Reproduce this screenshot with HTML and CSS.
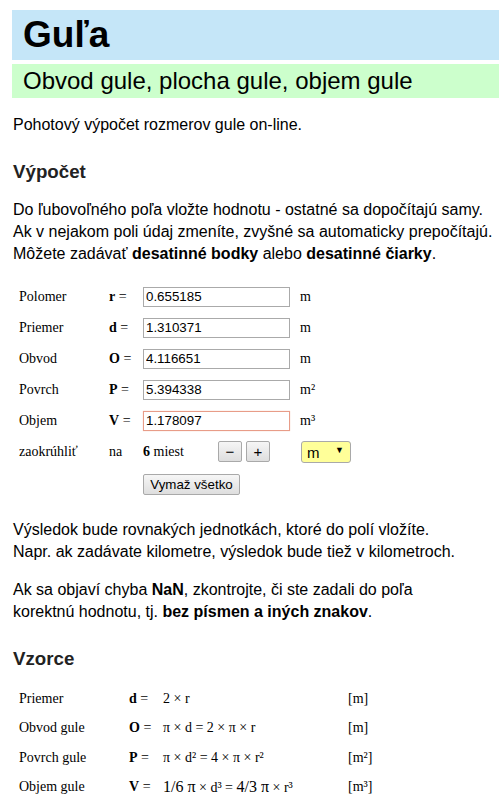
FILE: index.html
```html
<!DOCTYPE html>
<html lang="sk">
<head>
<meta charset="utf-8">
<title>Guľa</title>
<link rel="stylesheet" href="styles.css">
</head>
<body>
<h1 class="title">Guľa</h1>
<h2 class="subtitle">Obvod gule, plocha gule, objem gule</h2>
<p class="intro">Pohotový výpočet rozmerov gule on-line.</p>
<h3 class="section">Výpočet</h3>
<p class="text">Do ľubovoľného poľa vložte hodnotu - ostatné sa dopočítajú samy.<br>Ak v nejakom poli údaj zmeníte, zvyšné sa automaticky prepočítajú.<br>Môžete zadávať <b>desatinné bodky</b> alebo <b>desatinné čiarky</b>.</p>

<div class="calc">
  <span class="lbl">Polomer</span><span class="var"><b>r</b> =</span><input class="field" type="text" value="0.655185"><span class="unit">m</span>
  <span class="lbl">Priemer</span><span class="var"><b>d</b> =</span><input class="field" type="text" value="1.310371"><span class="unit">m</span>
  <span class="lbl">Obvod</span><span class="var"><b>O</b> =</span><input class="field" type="text" value="4.116651"><span class="unit">m</span>
  <span class="lbl">Povrch</span><span class="var"><b>P</b> =</span><input class="field" type="text" value="5.394338"><span class="unit">m²</span>
  <span class="lbl">Objem</span><span class="var"><b>V</b> =</span><input class="field field-active" type="text" value="1.178097"><span class="unit">m³</span>
  <span class="lbl">zaokrúhliť</span><span class="var">na</span>
  <span class="round"><span class="places"><b>6</b> miest</span><button class="btn btn-small">−</button><button class="btn btn-small">+</button></span>
  <span class="unitsel"><select class="sel"><option>m</option></select><span class="arrow">▼</span></span>
  <span class="lbl"></span><span class="var"></span><span class="clear"><button class="btn btn-clear">Vymaž všetko</button></span><span></span>
</div>

<p class="text after">Výsledok bude rovnakých jednotkách, ktoré do polí vložíte.<br>Napr. ak zadávate kilometre, výsledok bude tiež v kilometroch.</p>
<p class="text">Ak sa objaví chyba <b>NaN</b>, zkontrojte, či ste zadali do poľa<br>korektnú hodnotu, tj. <b>bez písmen a iných znakov</b>.</p>

<h3 class="section">Vzorce</h3>
<div class="formulas">
  <span class="lbl">Priemer</span><span class="var"><b>d</b> =</span><span class="f">2 × r</span><span class="u">[m]</span>
  <span class="lbl">Obvod gule</span><span class="var"><b>O</b> =</span><span class="f">π × d = 2 × π × r</span><span class="u">[m]</span>
  <span class="lbl">Povrch gule</span><span class="var"><b>P</b> =</span><span class="f">π × d² = 4 × π × r²</span><span class="u">[m²]</span>
  <span class="lbl">Objem gule</span><span class="var"><b>V</b> =</span><span class="f"><span class="big">1/6 π</span> × d³ = <span class="big">4/3 π</span> × r³</span><span class="u">[m³]</span>
</div>
</body>
</html>
```

FILE: styles.css
```css
html, body { background: #fff; }
body {
  margin: 10px 0 0 12px;
  font-family: "Liberation Sans", Arial, sans-serif;
  font-size: 16px;
  color: #000;
}
.title {
  margin: 0;
  background: #c5e6f8;
  height: 50px;
  line-height: 50px;
  padding: 0 11px;
  font-size: 37px;
  font-weight: bold;
}
.subtitle {
  margin: 4px 0 0;
  background: #ccffcc;
  height: 34px;
  line-height: 34px;
  padding: 0 11px;
  font-size: 24px;
  font-weight: normal;
}
.intro {
  margin: 16px 0 0 1px;
  line-height: 22px;
}
.section {
  margin: 25px 0 0 1px;
  font-size: 18.72px;
  font-weight: bold;
  color: #222;
  line-height: 22px;
}
.text {
  margin: 16px 0 0 1px;
  line-height: 22px;
}
.calc {
  display: grid;
  grid-template-columns: 90px 34px 157px auto;
  grid-template-rows: repeat(6, 31px) 34px;
  margin: 16px 0 0 7px;
  font-family: "Liberation Serif", "Times New Roman", serif;
  font-size: 14px;
  align-items: center;
}
.calc .lbl, .calc .var, .calc .unit { line-height: 20px; }
.field {
  box-sizing: border-box;
  width: 147px;
  height: 20px;
  border: 1px solid #aaa;
  padding: 1px 2px;
  margin: 0;
  font-family: "Liberation Sans", Arial, sans-serif;
  font-size: 13.33px;
  color: #000;
  outline: none;
}
.field-active { border-color: #e89c88; box-shadow: 0 0 1px #f2c2b4; }
.round {
  display: flex;
  align-items: center;
}
.places { width: 75px; }
.btn {
  box-sizing: border-box;
  font-family: "Liberation Sans", Arial, sans-serif;
  font-size: 13.33px;
  color: #000;
  background: linear-gradient(#f6f6f6, #dedede);
  border: 1px solid #a9a9a9;
  border-radius: 2px;
  padding: 0;
  margin: 0;
}
.btn-small {
  width: 24px;
  height: 21px;
  margin-right: 4px;
  font-size: 15px;
  line-height: 18px;
}
.unitsel {
  position: relative;
  display: inline-block;
  width: 50px;
  height: 22px;
  margin-left: 1px;
}
.sel {
  appearance: none;
  -webkit-appearance: none;
  box-sizing: border-box;
  width: 50px;
  height: 22px;
  background: #ffff99;
  border: 1px solid #a9a9a9;
  border-radius: 3px;
  padding: 2px 0 0 5px;
  margin: 0;
  font-family: "Liberation Sans", Arial, sans-serif;
  font-size: 15px;
  color: #000;
}
.arrow {
  position: absolute;
  right: 7px;
  top: 4px;
  font-size: 9px;
  pointer-events: none;
}
.btn-clear {
  width: 97px;
  height: 21px;
  font-size: 13.33px;
}
.after { margin-top: 18px; }
.formulas {
  display: grid;
  grid-template-columns: 110px 34px 185px auto;
  grid-auto-rows: 29.5px;
  margin: 14px 0 0 7px;
  font-family: "Liberation Serif", "Times New Roman", serif;
  font-size: 14px;
  align-items: center;
}
.big { font-size: 16px; }
```
